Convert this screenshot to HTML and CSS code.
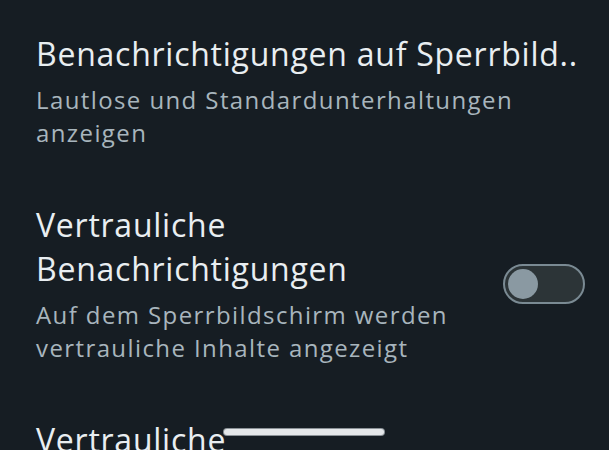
FILE: index.html
```html
<!DOCTYPE html>
<html lang="de">
<head>
<meta charset="utf-8">
<link rel="stylesheet" href="styles.css">
</head>
<body>
<main class="list">
  <section class="item">
    <div class="text">
      <div class="title">Benachrichtigungen auf Sperrbild..</div>
      <div class="summary">Lautlose und Standardunterhaltungen anzeigen</div>
    </div>
  </section>
  <section class="item">
    <div class="text">
      <div class="title">Vertrauliche Benachrichtigungen</div>
      <div class="summary">Auf dem Sperrbildschirm werden vertrauliche Inhalte angezeigt</div>
    </div>
    <div class="switch"><span class="thumb"></span></div>
  </section>
  <section class="item">
    <div class="text">
      <div class="title">Vertrauliche Benachrichtigungen</div>
    </div>
  </section>
</main>
<div class="home-bar"></div>
</body>
</html>
```
FILE: styles.css
```css
html, body {
  margin: 0;
  padding: 0;
  background: #161d23;
  overflow: hidden;
  height: 450px;
}
body {
  font-family: "Open Sans", "Noto Sans", sans-serif;
  position: relative;
}
.list {
  display: flex;
  flex-direction: column;
  gap: 54px;
  padding: 32px 24px 0 36px;
}
.item {
  display: flex;
  align-items: center;
  gap: 24px;
}
.text {
  flex: 1;
  display: flex;
  flex-direction: column;
  gap: 7px;
}
.title {
  font-size: 32px;
  line-height: 44px;
  letter-spacing: 0.75px;
  color: #e9eef1;
  max-width: 440px;
}
.item:first-child .title {
  max-width: none;
  white-space: nowrap;
}
.summary {
  font-size: 24px;
  line-height: 33px;
  letter-spacing: 1.4px;
  color: #a8b5bd;
  max-width: 500px;
}
.switch {
  width: 72px;
  height: 36px;
  border: 2.5px solid #7a8a93;
  border-radius: 21px;
  background: #2c3437;
  display: flex;
  align-items: center;
  padding: 0 3px;
  flex-shrink: 0;
}
.thumb {
  width: 30px;
  height: 30px;
  border-radius: 50%;
  background: #8a99a2;
}
.home-bar {
  position: absolute;
  left: 224px;
  top: 429px;
  width: 160px;
  height: 6px;
  border-radius: 3px;
  background: #e4e7e9;
  box-shadow: 0 0 0 1px #8b9297;
}
```
